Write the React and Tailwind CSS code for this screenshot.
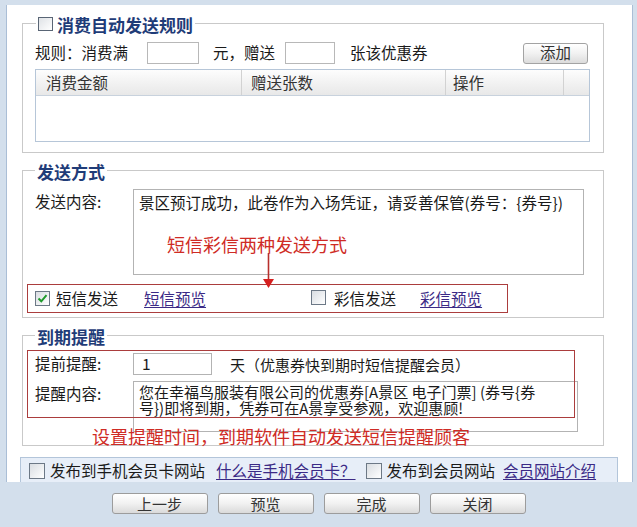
import React from 'react';

const Box = ({ checked }) => (
  <span className="inline-flex w-[15px] h-[15px] shrink-0 items-center justify-center border border-[#6c7886] bg-linear-to-br from-[#d9dde2] to-white">
    {checked && (
      <svg width="11" height="11" viewBox="0 0 11 11">
        <path d="M1.5 5.5 L4.3 8.3 L9.5 2.2" fill="none" stroke="#1f9a2c" strokeWidth="2" />
      </svg>
    )}
  </span>
);

const Link = ({ children, className = '' }) => (
  <span className={`text-[#3b2a86] underline underline-offset-[2px] ${className}`}>{children}</span>
);

const Btn = ({ children }) => (
  <div className="w-[96px] h-[21px] flex items-center justify-center border border-[#9c9c9c] rounded-[3px] bg-linear-to-b from-white via-[#f1f1f1] to-[#dadada] text-[#333]">
    {children}
  </div>
);

export default function App() {
  return (
    <div className="w-[637px] h-[527px] overflow-hidden bg-[#d3dfec] pt-[5px] font-['Noto_Sans_CJK_SC','Noto_Sans',sans-serif] text-[15.5px] leading-none text-[#1a1a1a]">
      <div className="ml-[6px] w-[627px] h-[477px] flex flex-col bg-white border-l border-r border-[#aabed6] pl-[15px] pt-[18px]">

        {/* 消费自动发送规则 */}
        <div className="w-[582px] flex flex-col border border-[#c9c9c9] pl-[12px] pr-[13px] pb-[10px]">
          <div className="-mt-[10px] ml-[1px] h-[20px] w-fit flex items-center gap-[4px] bg-white px-[2px]">
            <span className="w-[15px] h-[14px] border border-[#596575] bg-linear-to-br from-[#dfe2e6] to-white" />
            <span className="text-[17px] font-bold text-[#1f3c78]">消费自动发送规则</span>
          </div>
          <div className="mt-[8px] h-[22px] flex items-center">
            <span>规则：消费满</span>
            <div className="ml-[19px] w-[52px] h-[22px] border border-[#b8b8b8]" />
            <span className="ml-[14px]">元，赠送</span>
            <div className="ml-[10px] w-[50px] h-[22px] border border-[#b8b8b8]" />
            <span className="ml-[15px]">张该优惠券</span>
            <div className="ml-auto mr-[2px] w-[65px] h-[21px] flex items-center justify-center border border-[#a3a3a3] rounded-[3px] bg-linear-to-b from-white via-[#f1f1f1] to-[#dcdcdc] text-[#333]">添加</div>
          </div>
          <div className="mt-[5px] w-[555px] h-[73px] border border-[#b6c6d8]">
            <div className="h-[26px] flex border-b border-[#c8d2dd] bg-linear-to-b from-[#fdfdfd] to-[#e8e8e8] text-[#333]">
              <div className="w-[206px] flex items-center pl-[10px] border-r border-[#d2d2d2]">消费金额</div>
              <div className="w-[204px] flex items-center pl-[9px] border-r border-[#d2d2d2]">赠送张数</div>
              <div className="w-[118px] flex items-center pl-[7px] border-r border-[#d2d2d2]">操作</div>
              <div className="flex-1" />
            </div>
          </div>
        </div>

        {/* 发送方式 */}
        <div className="mt-[17px] w-[582px] flex flex-col border border-[#c9c9c9] pl-[12px] pb-[4px]">
          <div className="-mt-[10px] h-[20px] w-fit flex items-center bg-white px-[2px]">
            <span className="text-[17px] font-bold text-[#1f3c78]">发送方式</span>
          </div>
          <div className="mt-[8px] flex">
            <span className="w-[98px] pt-[5px]">发送内容:</span>
            <div className="relative w-[451px] h-[86px] border border-[#b3b3b3] px-[5px] pt-[4px] leading-[16px]">
              景区预订成功，此卷作为入场凭证，请妥善保管(券号：{'{'}券号{'}'})
              <span className="absolute left-[33px] top-[45px] text-[18px] leading-[18px] text-[#cf2b25]">短信彩信两种发送方式</span>
              <svg className="absolute left-[129px] top-[63px] z-10" width="11" height="36" viewBox="0 0 11 36">
                <line x1="5.5" y1="0" x2="5.5" y2="27" stroke="#b8302c" strokeWidth="1.6" />
                <polygon points="0,26 11,26 5.5,35" fill="#d61f1f" />
              </svg>
            </div>
          </div>
          <div className="mt-[9px] -ml-[8px] w-[481px] h-[29px] flex items-center border border-[#ab3d3d] pl-[7px]">
            <Box checked />
            <span className="ml-[6px]">短信发送</span>
            <Link className="ml-[26px]">短信预览</Link>
            <span className="ml-[105px]"><Box /></span>
            <span className="ml-[8px]">彩信发送</span>
            <Link className="ml-[24px]">彩信预览</Link>
          </div>
        </div>

        {/* 到期提醒 */}
        <div className="relative mt-[17px] w-[582px] flex flex-col border border-[#c9c9c9] pl-[12px] pb-[13px]">
          <div className="-mt-[10px] h-[20px] w-fit flex items-center bg-white px-[2px]">
            <span className="text-[17px] font-bold text-[#1f3c78]">到期提醒</span>
          </div>
          <div className="absolute left-[4px] top-[14px] w-[548px] h-[68px] border border-[#ab3d3d]" />
          <div className="mt-[7px] h-[22px] flex items-center">
            <span className="w-[98px]">提前提醒:</span>
            <div className="w-[79px] h-[22px] flex items-center border border-[#b3b3b3] pl-[8px]">1</div>
            <span className="ml-[18px] text-[15px]">天（优惠券快到期时短信提醒会员）</span>
          </div>
          <div className="mt-[6px] flex">
            <span className="w-[98px] pt-[5px]">提醒内容:</span>
            <div className="w-[445px] h-[51px] border border-[#b3b3b3] px-[5px] pt-[2px] text-[15px] leading-[16px]">
              您在幸福鸟服装有限公司的优惠券[A景区 电子门票] (券号{'{'}券<br />
              号{'}'})即将到期，凭券可在A景享受参观，欢迎惠顾!
            </div>
          </div>
          <span className="absolute left-[69px] top-[91px] text-[18px] leading-[18px] text-[#cf2b25]">设置提醒时间，到期软件自动发送短信提醒顾客</span>
        </div>

        {/* 发布 */}
        <div className="mt-auto -ml-[2px] w-[598px] h-[25px] flex items-center border border-b-0 border-[#b3c5da] bg-[#e7eef8] pl-[8px] pt-[2px]">
          <span className="w-[16px] h-[16px] border border-[#6c7886] bg-linear-to-br from-[#d9dde2] to-white" />
          <span className="ml-[5px]">发布到手机会员卡网站</span>
          <Link className="ml-[11px]">什么是手机会员卡？</Link>
          <span className="ml-[10px] w-[16px] h-[16px] border border-[#6c7886] bg-linear-to-br from-[#d9dde2] to-white" />
          <span className="ml-[5px]">发布到会员网站</span>
          <Link className="ml-[8px]">会员网站介绍</Link>
        </div>
      </div>

      <div className="mt-[11px] flex justify-center gap-[10px] text-[15px]">
        <Btn>上一步</Btn>
        <Btn>预览</Btn>
        <Btn>完成</Btn>
        <Btn>关闭</Btn>
      </div>
    </div>
  );
}
